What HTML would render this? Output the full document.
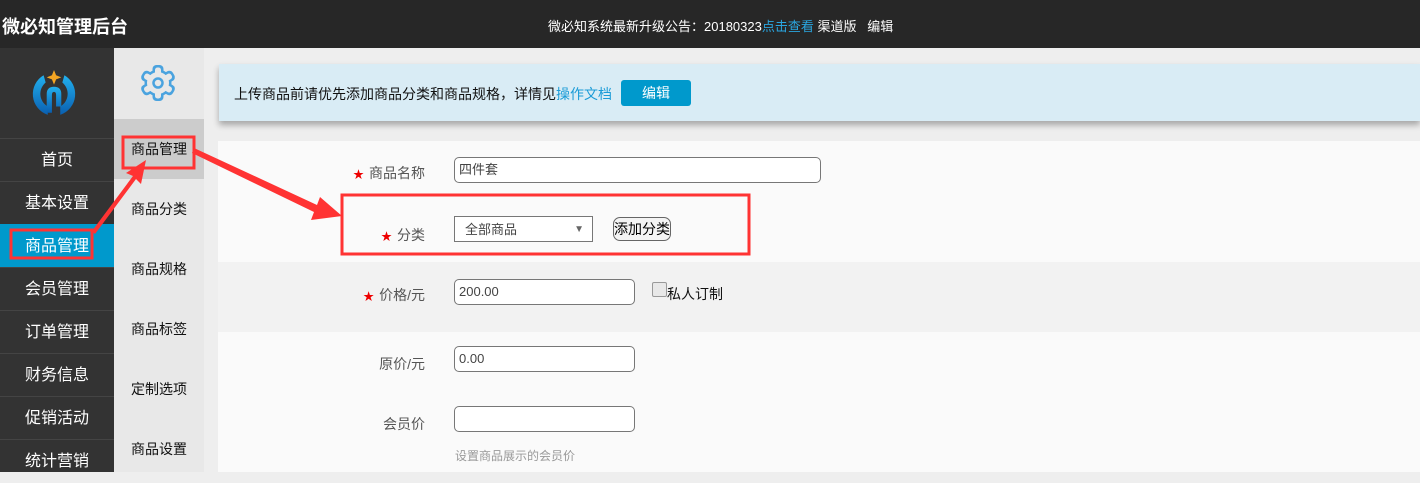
<!DOCTYPE html>
<html><head><meta charset="utf-8"><style>
*{margin:0;padding:0;box-sizing:border-box}
body{width:1420px;height:472px;overflow:hidden;background:#eee;font-family:"Liberation Sans","Noto Sans CJK SC",sans-serif;position:relative}
.abs{position:absolute}
#top{left:0;top:0;width:1420px;height:48px;background:#272727;color:#fff}
#side{left:0;top:48px;width:114px;height:424px;background:#333}
.mi{position:absolute;left:0;width:114px;height:43px;line-height:43px;text-align:center;color:#fff;font-size:16px;border-top:1px solid #444}
#sub{left:114px;top:48px;width:90px;height:424px;background:#e8e8e8}
.si{position:absolute;left:0;width:90px;height:60px;line-height:60px;text-align:center;font-size:14px;color:#111}
.lbl{position:absolute;font-size:14px;color:#555;text-align:right;width:120px}
.star{color:#e00;font-size:11px;margin-right:5px}
.inp{position:absolute;background:#fff;border:1px solid #777;border-radius:5px;height:26px;font-size:13px;color:#444;padding-left:4px;line-height:24px}
</style></head><body>
<div id="top" class="abs">
 <div class="abs" style="left:2px;top:13px;font-size:18px;font-weight:bold">微必知管理后台</div>
 <div class="abs" style="left:548px;top:16px;font-size:13px">微必知系统最新升级公告：20180323<span style="color:#2aa6e0">点击查看</span> 渠道版 &nbsp; 编辑</div>
</div>
<div id="side" class="abs">
 <svg class="abs" style="left:29px;top:21px" width="50" height="50" viewBox="0 0 48 48">
  <defs><linearGradient id="g" x1="0" y1="0" x2="0" y2="1"><stop offset="0" stop-color="#22b0ee"/><stop offset="1" stop-color="#0a5fb0"/></linearGradient></defs>
  <path d="M14 6 A21 21 0 0 0 18 44 L18 36 A14 14 0 0 1 16 13 Z" fill="url(#g)"/>
  <path d="M34 6 A21 21 0 0 1 30 44 L30 36 A14 14 0 0 0 32 13 Z" fill="url(#g)"/>
  <path d="M17 42 V24 Q17 17 24 17 Q31 17 31 24 V36 H26 V25 Q26 22 24 22 Q22 22 22 25 V42 Z" fill="url(#g)"/>
  <path d="M24 1 L26 6 L31 8 L26 10 L24 15 L22 10 L17 8 L22 6 Z" fill="#f5a623"/>
 </svg>
 <div class="mi" style="top:90px">首页</div>
 <div class="mi" style="top:133px">基本设置</div>
 <div class="mi" style="top:176px;background:#0099cc;border-top-color:#0099cc">商品管理</div>
 <div class="mi" style="top:219px">会员管理</div>
 <div class="mi" style="top:262px">订单管理</div>
 <div class="mi" style="top:305px">财务信息</div>
 <div class="mi" style="top:348px">促销活动</div>
 <div class="mi" style="top:391px">统计营销</div>
</div>
<div id="sub" class="abs">
 <svg class="abs" style="left:24px;top:15px" width="40" height="40" viewBox="0 0 40 40">
  <g fill="#4aa3df">
   <circle cx="20" cy="20" r="13.5"/>
   <g id="t"><rect x="14.5" y="2" width="11" height="10" rx="4"/></g>
   <use href="#t" transform="rotate(60 20 20)"/><use href="#t" transform="rotate(120 20 20)"/>
   <use href="#t" transform="rotate(180 20 20)"/><use href="#t" transform="rotate(240 20 20)"/>
   <use href="#t" transform="rotate(300 20 20)"/>
  </g>
  <g fill="#e8e8e8">
   <circle cx="20" cy="20" r="11"/>
   <g id="t2"><rect x="17" y="4.5" width="6" height="8" rx="2.5"/></g>
   <use href="#t2" transform="rotate(60 20 20)"/><use href="#t2" transform="rotate(120 20 20)"/>
   <use href="#t2" transform="rotate(180 20 20)"/><use href="#t2" transform="rotate(240 20 20)"/>
   <use href="#t2" transform="rotate(300 20 20)"/>
  </g>
  <circle cx="20" cy="20" r="4.5" fill="none" stroke="#4aa3df" stroke-width="2.5"/>
 </svg>
 <div class="si" style="top:71px;background:#ccc">商品管理</div>
 <div class="si" style="top:131px">商品分类</div>
 <div class="si" style="top:191px">商品规格</div>
 <div class="si" style="top:251px">商品标签</div>
 <div class="si" style="top:311px">定制选项</div>
 <div class="si" style="top:371px">商品设置</div>
</div>
<div class="abs" style="left:219px;top:64px;width:1201px;height:57px;background:#d9ecf5;box-shadow:0 4px 6px rgba(0,0,0,.3)">
 <div class="abs" style="left:15px;top:20px;font-size:14px;color:#111">上传商品前请优先添加商品分类和商品规格，详情见<span style="color:#1a9bd7">操作文档</span></div>
 <div class="abs" style="left:402px;top:16px;width:70px;height:26px;background:#0099cc;border-radius:3px;color:#fff;font-size:14px;text-align:center;line-height:26px">编辑</div>
</div>
<div class="abs" style="left:218px;top:141px;width:1202px;height:331px;background:#fafafa">
 <div class="abs" style="left:0;top:121px;width:1202px;height:70px;background:#f2f2f2"></div>
</div>
<div class="lbl" style="left:305px;top:163px"><span class="star">★</span>商品名称</div>
<div class="inp" style="left:454px;top:157px;width:367px">四件套</div>
<div class="lbl" style="left:305px;top:225px"><span class="star">★</span>分类</div>
<div class="inp" style="left:454px;top:216px;width:139px;border-radius:0;padding-left:10px;line-height:26px">全部商品<span style="position:absolute;right:8px;font-size:10px;color:#666">▼</span></div>
<div class="abs" style="left:613px;top:217px;width:58px;height:24px;border:1px solid #666;border-radius:7px;font-size:14px;line-height:22px;text-align:center;background:#f4f4f4">添加分类</div>
<div class="lbl" style="left:305px;top:285px"><span class="star">★</span>价格/元</div>
<div class="inp" style="left:454px;top:279px;width:181px">200.00</div>
<div class="abs" style="left:652px;top:282px;width:15px;height:15px;border:1px solid #999;border-radius:2px;background:#e8e8e8"></div>
<div class="abs" style="left:667px;top:284px;font-size:14px;color:#111">私人订制</div>
<div class="lbl" style="left:305px;top:354px">原价/元</div>
<div class="inp" style="left:454px;top:346px;width:181px">0.00</div>
<div class="lbl" style="left:305px;top:414px">会员价</div>
<div class="inp" style="left:454px;top:406px;width:181px"></div>
<div class="abs" style="left:455px;top:447px;font-size:12px;color:#999">设置商品展示的会员价</div>
<svg class="abs" style="left:0;top:0" width="1420" height="472">
 <g fill="none" stroke="#f33" stroke-width="3">
  <rect x="11" y="230" width="81" height="28"/>
  <rect x="123" y="137" width="71" height="31"/>
  <rect x="342" y="195" width="407" height="59"/>
 </g>
 <path d="M92 231 L133 176 L126 173 L146 160 L141 184 L136 179 L95 234 Z" fill="#f33"/>
 <path d="M194 148 L317 205 L320 197 L342 216 L311 220 L314 212 L192 153 Z" fill="#f33"/>
</svg>
</body></html>
